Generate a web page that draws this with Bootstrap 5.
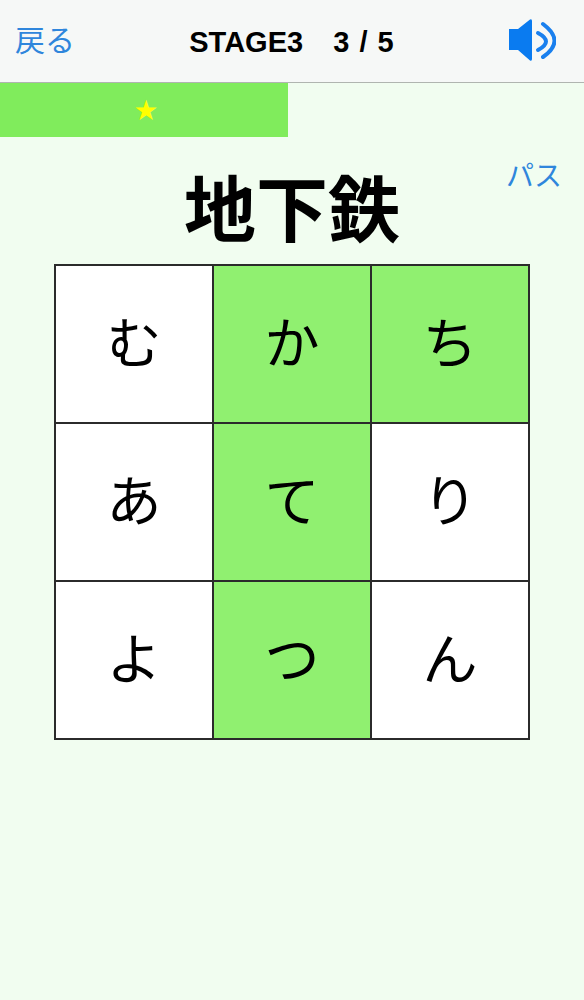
<!DOCTYPE html>
<html lang="ja"><head><meta charset="utf-8">
<link href="https://cdn.jsdelivr.net/npm/bootstrap@5.3.0/dist/css/bootstrap.min.css" rel="stylesheet">
<style>
body{background:#f1fdf0;font-family:"Liberation Sans","Noto Sans CJK JP",sans-serif;color:#000;margin:0}
.topbar{height:83px;background:#f6f8f7;border-bottom:1px solid #b0b5b0;padding:2px 28px 0 15px}
.linkish{color:#2f86dc;font-weight:400;text-decoration:none}
.back{font-size:30px;line-height:1;width:100px;margin-top:-2px}
.ttl{font-size:29px;font-weight:700;white-space:pre;line-height:1;word-spacing:2px;margin-left:12px}
.snd{width:100px;margin-top:-3px}
.prog{width:288px;height:54px;background:#80ec5c;padding-left:4px}
.starg{color:#ff0;font-size:23px;line-height:1}
.headrow{height:127px}
.word{font-size:72px;font-weight:700;line-height:1;padding-top:38px}
.pass{font-size:28px;line-height:1;position:absolute;right:22px;top:26px}
.grid3{width:476px;margin-left:54px;display:grid;grid-template-columns:repeat(3,158px);grid-auto-rows:158px;border:solid #2b2b2b;border-width:2px 0 0 2px;background:#fff}
.cellx{border:solid #2b2b2b;border-width:0 2px 2px 0;font-size:55px;line-height:1;font-weight:400}
.on{background:#90f070}
</style></head><body>
<div class="topbar d-flex align-items-center justify-content-between">
<a class="linkish back" href="#">戻る</a>
<div class="ttl">STAGE3   3 / 5</div>
<div class="snd d-flex justify-content-end">
<svg width="48" height="44" viewBox="0 0 48 44"><path d="M1 10H10L22 .5Q24 -.5 24 2V40Q24 42.500 22 41.500L10 31H1Z" fill="#0a7bf0"/><path d="M30 14Q46 22.500 30 31" fill="none" stroke="#1a80ee" stroke-width="4" stroke-linecap="round"/><path d="M35 5Q58 22 35 38" fill="none" stroke="#1a80ee" stroke-width="4" stroke-linecap="round"/></svg>
</div></div>
<div class="prog d-flex align-items-center justify-content-center"><span class="starg">★</span></div>
<div class="headrow position-relative text-center">
<div class="word">地下鉄</div>
<a class="linkish pass" href="#">パス</a>
</div>
<div class="grid3 text-center">
<div class="cellx d-flex align-items-center justify-content-center">む</div>
<div class="cellx on d-flex align-items-center justify-content-center">か</div>
<div class="cellx on d-flex align-items-center justify-content-center">ち</div>
<div class="cellx d-flex align-items-center justify-content-center">あ</div>
<div class="cellx on d-flex align-items-center justify-content-center">て</div>
<div class="cellx d-flex align-items-center justify-content-center">り</div>
<div class="cellx d-flex align-items-center justify-content-center">よ</div>
<div class="cellx on d-flex align-items-center justify-content-center">つ</div>
<div class="cellx d-flex align-items-center justify-content-center">ん</div>
</div>
<script src="https://cdn.jsdelivr.net/npm/bootstrap@5.3.0/dist/js/bootstrap.bundle.min.js"></script>
</body></html>
